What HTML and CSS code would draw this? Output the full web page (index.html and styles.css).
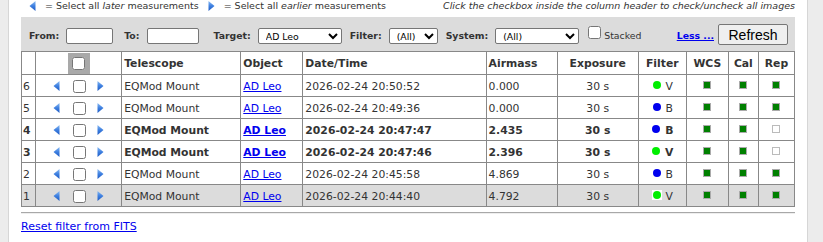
FILE: index.html
```html
<!DOCTYPE html>
<html>
<head>
<meta charset="utf-8">
<link rel="stylesheet" href="styles.css">
</head>
<body>
<svg class="defs" width="0" height="0">
  <defs>
    <linearGradient id="ag" x1="0" y1="0" x2="0" y2="1">
      <stop offset="0" stop-color="#8cbcf4"/>
      <stop offset="0.5" stop-color="#3d7fe0"/>
      <stop offset="1" stop-color="#1f5cc4"/>
    </linearGradient>
  </defs>
</svg>
<div class="page">
  <div class="legend">
    <div class="legend-left">
      <svg class="arrow" width="7" height="10" viewBox="0 0 7 10"><polygon points="6.5,0 0.5,5 6.5,10" fill="url(#ag)"/></svg>
      <span class="legend-text">= Select all <i>later</i> measurements</span>
      <svg class="arrow" width="7" height="10" viewBox="0 0 7 10"><polygon points="0.5,0 6.5,5 0.5,10" fill="url(#ag)"/></svg>
      <span class="legend-text">= Select all <i>earlier</i> measurements</span>
    </div>
    <div class="legend-right">Click the checkbox inside the column header to check/uncheck all images</div>
  </div>

  <div class="toolbar">
    <label class="lbl">From:</label>
    <input class="txt txt-from" type="text">
    <label class="lbl">To:</label>
    <input class="txt txt-to" type="text">
    <label class="lbl">Target:</label>
    <select class="sel sel-wide"><option>AD Leo</option></select>
    <label class="lbl">Filter:</label>
    <select class="sel sel-narrow"><option>(All)</option></select>
    <label class="lbl">System:</label>
    <select class="sel sel-wide sel-last"><option>(All)</option></select>
    <input class="chk-stacked" type="checkbox">
    <span class="stacked">Stacked</span>
    <a class="less" href="#">Less ...</a>
    <button class="refresh">Refresh</button>
  </div>

  <table class="grid">
    <colgroup>
      <col style="width:14px"><col style="width:86px"><col style="width:119px"><col style="width:62px"><col style="width:183px"><col style="width:71px"><col style="width:81px"><col style="width:48px"><col style="width:42px"><col style="width:30px"><col style="width:36px">
    </colgroup>
    <thead>
      <tr>
        <th></th>
        <th class="c"><span class="allbox"><input type="checkbox"></span></th>
        <th>Telescope</th>
        <th>Object</th>
        <th>Date/Time</th>
        <th>Airmass</th>
        <th class="c">Exposure</th>
        <th class="c">Filter</th>
        <th class="c">WCS</th>
        <th class="c">Cal</th>
        <th class="c">Rep</th>
      </tr>
    </thead>
    <tbody>
      <tr>
        <td>6</td>
        <td><div class="sel-cell"><svg class="arrow" width="7" height="10" viewBox="0 0 7 10"><polygon points="6.5,0 0.5,5 6.5,10" fill="url(#ag)"/></svg><input class="rowchk" type="checkbox"><svg class="arrow" width="7" height="10" viewBox="0 0 7 10"><polygon points="0.5,0 6.5,5 0.5,10" fill="url(#ag)"/></svg></div></td>
        <td>EQMod Mount</td>
        <td><a href="#">AD Leo</a></td>
        <td>2026-02-24 20:50:52</td>
        <td>0.000</td>
        <td class="c">30 s</td>
        <td class="c"><span class="flt"><span class="dot"><span class="dot-in green"></span></span>V</span></td>
        <td class="c"><span class="sq on"></span></td>
        <td class="c"><span class="sq on"></span></td>
        <td class="c"><span class="sq on"></span></td>
      </tr>
      <tr>
        <td>5</td>
        <td><div class="sel-cell"><svg class="arrow" width="7" height="10" viewBox="0 0 7 10"><polygon points="6.5,0 0.5,5 6.5,10" fill="url(#ag)"/></svg><input class="rowchk" type="checkbox"><svg class="arrow" width="7" height="10" viewBox="0 0 7 10"><polygon points="0.5,0 6.5,5 0.5,10" fill="url(#ag)"/></svg></div></td>
        <td>EQMod Mount</td>
        <td><a href="#">AD Leo</a></td>
        <td>2026-02-24 20:49:36</td>
        <td>0.000</td>
        <td class="c">30 s</td>
        <td class="c"><span class="flt"><span class="dot"><span class="dot-in blue"></span></span>B</span></td>
        <td class="c"><span class="sq on"></span></td>
        <td class="c"><span class="sq on"></span></td>
        <td class="c"><span class="sq on"></span></td>
      </tr>
      <tr class="bold">
        <td>4</td>
        <td><div class="sel-cell"><svg class="arrow" width="7" height="10" viewBox="0 0 7 10"><polygon points="6.5,0 0.5,5 6.5,10" fill="url(#ag)"/></svg><input class="rowchk" type="checkbox"><svg class="arrow" width="7" height="10" viewBox="0 0 7 10"><polygon points="0.5,0 6.5,5 0.5,10" fill="url(#ag)"/></svg></div></td>
        <td>EQMod Mount</td>
        <td><a href="#">AD Leo</a></td>
        <td>2026-02-24 20:47:47</td>
        <td>2.435</td>
        <td class="c">30 s</td>
        <td class="c"><span class="flt"><span class="dot"><span class="dot-in blue"></span></span>B</span></td>
        <td class="c"><span class="sq on"></span></td>
        <td class="c"><span class="sq on"></span></td>
        <td class="c"><span class="sq off"></span></td>
      </tr>
      <tr class="bold">
        <td>3</td>
        <td><div class="sel-cell"><svg class="arrow" width="7" height="10" viewBox="0 0 7 10"><polygon points="6.5,0 0.5,5 6.5,10" fill="url(#ag)"/></svg><input class="rowchk" type="checkbox"><svg class="arrow" width="7" height="10" viewBox="0 0 7 10"><polygon points="0.5,0 6.5,5 0.5,10" fill="url(#ag)"/></svg></div></td>
        <td>EQMod Mount</td>
        <td><a href="#">AD Leo</a></td>
        <td>2026-02-24 20:47:46</td>
        <td>2.396</td>
        <td class="c">30 s</td>
        <td class="c"><span class="flt"><span class="dot"><span class="dot-in green"></span></span>V</span></td>
        <td class="c"><span class="sq on"></span></td>
        <td class="c"><span class="sq on"></span></td>
        <td class="c"><span class="sq off"></span></td>
      </tr>
      <tr>
        <td>2</td>
        <td><div class="sel-cell"><svg class="arrow" width="7" height="10" viewBox="0 0 7 10"><polygon points="6.5,0 0.5,5 6.5,10" fill="url(#ag)"/></svg><input class="rowchk" type="checkbox"><svg class="arrow" width="7" height="10" viewBox="0 0 7 10"><polygon points="0.5,0 6.5,5 0.5,10" fill="url(#ag)"/></svg></div></td>
        <td>EQMod Mount</td>
        <td><a href="#">AD Leo</a></td>
        <td>2026-02-24 20:45:58</td>
        <td>4.869</td>
        <td class="c">30 s</td>
        <td class="c"><span class="flt"><span class="dot"><span class="dot-in blue"></span></span>B</span></td>
        <td class="c"><span class="sq on"></span></td>
        <td class="c"><span class="sq on"></span></td>
        <td class="c"><span class="sq on"></span></td>
      </tr>
      <tr class="current">
        <td>1</td>
        <td><div class="sel-cell"><svg class="arrow" width="7" height="10" viewBox="0 0 7 10"><polygon points="6.5,0 0.5,5 6.5,10" fill="url(#ag)"/></svg><input class="rowchk" type="checkbox"><svg class="arrow" width="7" height="10" viewBox="0 0 7 10"><polygon points="0.5,0 6.5,5 0.5,10" fill="url(#ag)"/></svg></div></td>
        <td>EQMod Mount</td>
        <td><a href="#">AD Leo</a></td>
        <td>2026-02-24 20:44:40</td>
        <td>4.792</td>
        <td class="c">30 s</td>
        <td class="c"><span class="flt"><span class="dot"><span class="dot-in green"></span></span>V</span></td>
        <td class="c"><span class="sq on"></span></td>
        <td class="c"><span class="sq on"></span></td>
        <td class="c"><span class="sq on"></span></td>
      </tr>
    </tbody>
  </table>

  <div class="rule"></div>
  <a class="reset" href="#">Reset filter from FITS</a>
</div>
</body>
</html>
```

FILE: styles.css
```css
html, body {
  margin: 0;
  padding: 0;
}
body {
  background: #ececec;
  font-family: "DejaVu Sans", Verdana, sans-serif;
  color: #333;
  height: 242px;
  overflow: hidden;
}
.defs {
  position: absolute;
  width: 0;
  height: 0;
}
.page {
  margin-left: 8px;
  width: 774px;
  height: 242px;
  padding: 0 12px;
  background: #fff;
  border-left: 1px solid #d6d6d6;
  border-right: 1px solid #d6d6d6;
}
.legend {
  display: flex;
  justify-content: space-between;
  align-items: center;
  height: 17px;
  padding-bottom: 0;
  font-size: 9.5px;
  line-height: 12px;
}
.legend-left {
  display: flex;
  align-items: center;
  padding-left: 8px;
  margin-top: -5px;
}
.legend-left .arrow {
  margin-right: 9px;
}
.legend-left .legend-text {
  margin-right: 9px;
}
.legend-right {
  font-style: italic;
  margin-top: -5px;
}
.arrow {
  display: block;
  flex: none;
}

.toolbar {
  display: flex;
  align-items: flex-end;
  height: 34px;
  box-sizing: border-box;
  padding: 0 7px 7px 8px;
  background: #dcdcdc;
  font-size: 9.33px;
}
.lbl {
  font-weight: bold;
  line-height: 16px;
  margin-right: 7px;
}
.txt {
  box-sizing: border-box;
  width: 47px;
  height: 16px;
  margin: 0 11px 0 0;
  border: 1px solid #767676;
  border-radius: 2px;
  background: #fff;
  padding: 0 2px;
}
.txt-to {
  width: 52px;
  margin-right: 15px;
}
.sel {
  box-sizing: border-box;
  height: 16px;
  margin: 0 8px 0 0;
  padding: 0 0 0 3px;
  font-family: "DejaVu Sans", Verdana, sans-serif;
  font-size: 9.33px;
  color: #000;
  border: 1px solid #767676;
  border-radius: 2px;
  background: #fff;
}
.sel-wide { width: 84px; }
.sel-narrow { width: 49px; }
.sel-last { margin-right: 9px; }
.chk-stacked {
  width: 13px;
  height: 13px;
  margin: 0 3px 5px 0;
}
.stacked {
  line-height: 16px;
}
.less {
  margin-left: auto;
  margin-right: 4px;
  font-weight: bold;
  color: #0000ee;
  line-height: 16px;
}
.refresh {
  box-sizing: border-box;
  width: 70px;
  height: 21px;
  margin-bottom: -1px;
  padding: 0;
  font-family: "Liberation Sans", Arial, sans-serif;
  font-size: 14px;
  color: #000;
  background: #efefef;
  border: 1px solid #767676;
  border-radius: 2px;
}

.grid {
  width: 774px;
  table-layout: fixed;
  border-collapse: collapse;
  font-size: 10.8px;
  border: 1px solid #888;
}
.grid th, .grid td {
  border: 1px solid #888;
  padding: 0 0 0 2px;
  text-align: left;
  white-space: nowrap;
  overflow: hidden;
}
.grid th {
  height: 22px;
  font-weight: bold;
}
.grid td {
  height: 20px;
  padding-top: 1px;
}
.grid td:first-child, .grid th:first-child {
  padding-left: 1px;
}
.grid .c {
  text-align: center;
  padding-left: 0;
}
.grid a {
  color: #0000ee;
}
.grid tr.bold td {
  font-weight: bold;
}
.grid tr.current td {
  background: #dcdcdc;
}
.allbox {
  display: inline-flex;
  align-items: center;
  justify-content: center;
  width: 22px;
  height: 21px;
  background: #a9a9a9;
  vertical-align: middle;
}
.allbox input {
  width: 13px;
  height: 13px;
  margin: 0;
}
.sel-cell {
  display: flex;
  align-items: center;
  justify-content: center;
  padding-right: 2px;
}
.rowchk {
  width: 13px;
  height: 13px;
  margin: 0 11px 0 13px;
}
.flt {
  display: inline-flex;
  align-items: center;
}
.dot {
  display: inline-flex;
  align-items: center;
  justify-content: center;
  width: 10px;
  height: 10px;
  background: #fff;
  margin-right: 4px;
  margin-top: -2px;
}
.dot-in {
  width: 8px;
  height: 8px;
  border-radius: 50%;
}
.dot-in.green { background: #00ee00; }
.dot-in.blue { background: #0000ee; }
.sq {
  display: inline-block;
  box-sizing: border-box;
  width: 8px;
  height: 8px;
  border: 1px solid #aaa;
  vertical-align: middle;
  margin-top: -4px;
}
.sq.on { background: #008000; }
.sq.off { background: #fff; border-color: #bbb; }

.rule {
  margin-top: 5px;
  border-top: 1px solid #a8a8a8;
  border-bottom: 1px solid #eee;
}
.reset {
  display: inline-block;
  margin-top: 6px;
  font-size: 11px;
  color: #0000ee;
}
```
